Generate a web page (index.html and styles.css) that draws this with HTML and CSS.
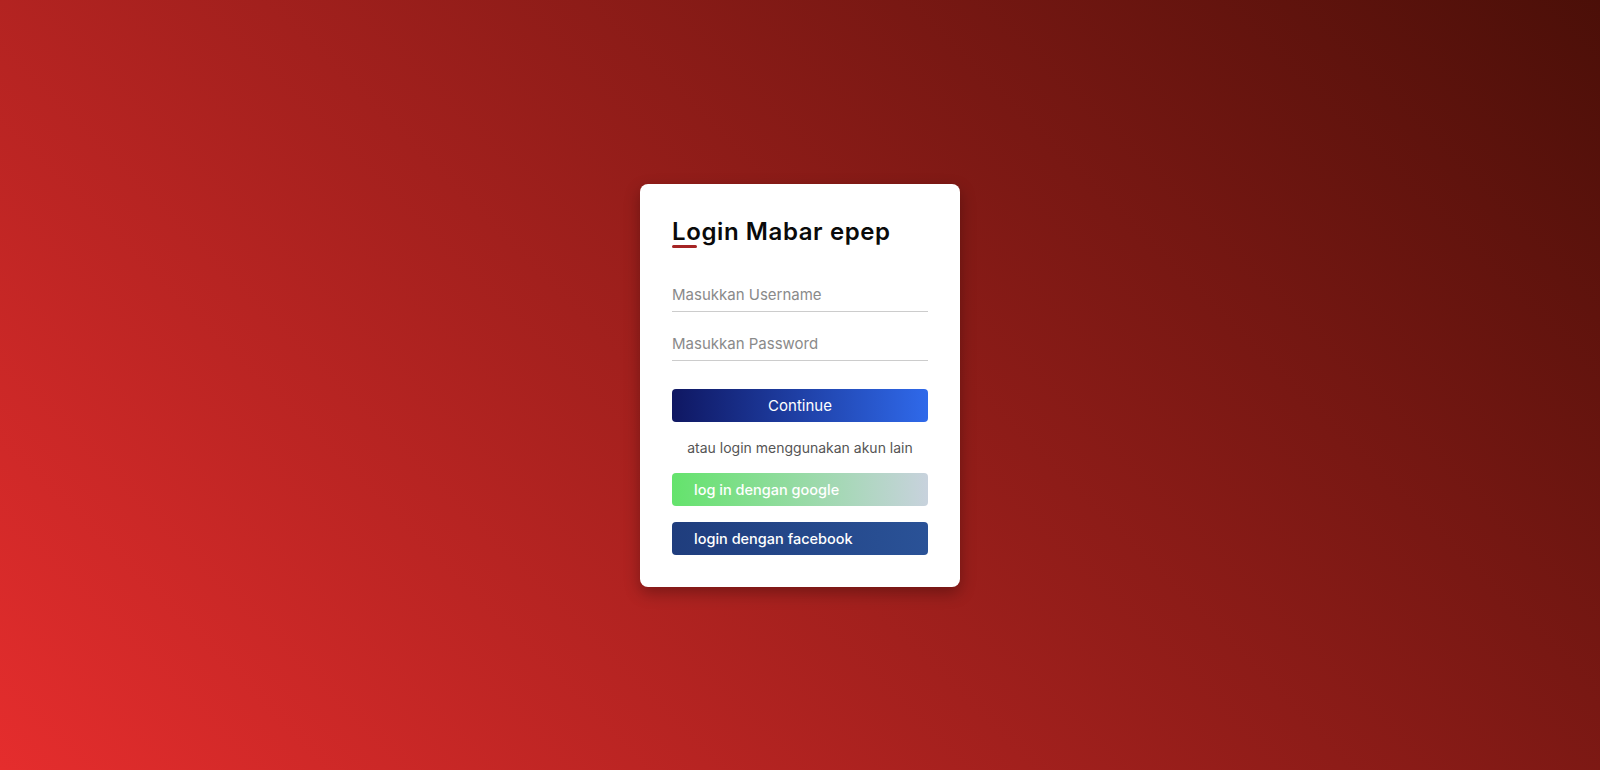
FILE: index.html
```html
<!DOCTYPE html>
<html lang="id">
<head>
<meta charset="utf-8">
<title>Login Mabar epep</title>
<link rel="stylesheet" href="styles.css">
</head>
<body>
<main class="page">
  <div class="card">
    <h2 class="title">Login Mabar epep</h2>
    <form class="form">
      <input class="field" type="text" placeholder="Masukkan Username">
      <input class="field field-2" type="password" placeholder="Masukkan Password">
      <button class="btn btn-continue" type="button">Continue</button>
      <p class="alt">atau login menggunakan akun lain</p>
      <button class="btn btn-social btn-google" type="button">log in dengan google</button>
      <button class="btn btn-social btn-facebook" type="button">login dengan facebook</button>
    </form>
  </div>
</main>
</body>
</html>
```
FILE: styles.css
```css
* { box-sizing: border-box; }
html, body { margin: 0; padding: 0; }
body {
  font-family: "Inter", "DejaVu Sans", sans-serif;
  background: linear-gradient(45deg, #e52d2d 0%, #4b0f08 100%);
  min-height: 100vh;
}
.page {
  height: 100vh;
  display: flex;
  align-items: center;
  justify-content: center;
}
.card {
  width: 320px;
  background: #fff;
  border-radius: 8px;
  padding: 32px;
  box-shadow: 0 6px 16px rgba(0, 0, 0, 0.3);
}
.title {
  margin: 0;
  font-size: 24px;
  line-height: 32px;
  font-weight: 600;
  color: #0a0a0a;
  letter-spacing: 0.6px;
}
.title::after {
  content: "";
  display: block;
  width: 25px;
  height: 3px;
  margin-top: -3px;
  border-radius: 2px;
  background: #a52424;
}
.form {
  display: flex;
  flex-direction: column;
  margin-top: 30px;
}
.field {
  height: 34px;
  border: none;
  border-bottom: 1px solid #cccccc;
  padding: 0;
  font-family: inherit;
  font-size: 15px;
  color: #333;
  outline: none;
  background: transparent;
}
.field::placeholder { color: #8a8a8a; }
.field-2 { margin-top: 15px; }
.btn {
  height: 33px;
  border: none;
  border-radius: 4px;
  font-family: inherit;
  font-size: 15px;
  color: #fff;
  cursor: pointer;
}
.btn-continue {
  margin-top: 28px;
  background: linear-gradient(90deg, #0f1762 0%, #2f69ea 100%);
  font-weight: 400;
}
.alt {
  margin: 16px 0 0;
  text-align: center;
  font-size: 14px;
  line-height: 20px;
  color: #555;
}
.btn-social {
  text-align: left;
  padding-left: 22px;
  font-size: 14.5px;
  font-weight: 500;
}
.btn-google {
  margin-top: 15px;
  background: linear-gradient(90deg, #64e36c 0%, #c8d2dd 100%);
}
.btn-facebook {
  margin-top: 16px;
  background: linear-gradient(90deg, #1f3d7d 0%, #2a5297 100%);
}
```
